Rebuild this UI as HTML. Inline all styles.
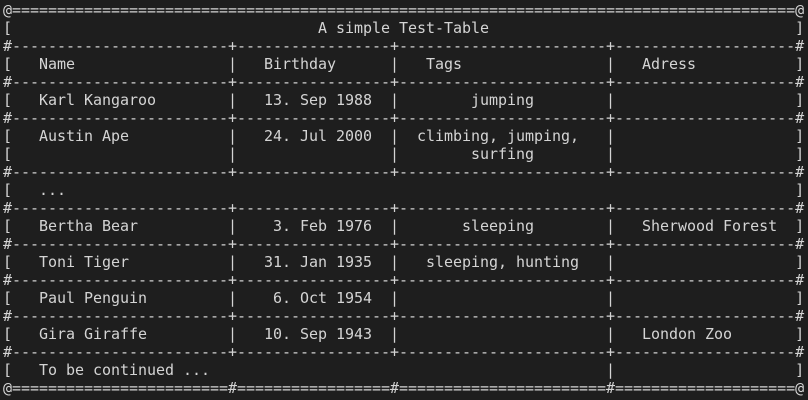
<!DOCTYPE html>
<html><head><meta charset="utf-8"><style>
html,body{margin:0;padding:0;background:#1e1e1e;width:808px;height:400px;overflow:hidden}
pre{margin:0;padding:1px 0 0 3px;font-family:"DejaVu Sans Mono","Liberation Mono",monospace;font-size:15px;line-height:18px;color:#d4d4d4;letter-spacing:-0.03px}
</style></head><body><pre>@=======================================================================================@
[                                  A simple Test-Table                                  ]
#------------------------+-----------------+-----------------------+--------------------#
[   Name                 |   Birthday      |   Tags                |   Adress           ]
#------------------------+-----------------+-----------------------+--------------------#
[   Karl Kangaroo        |   13. Sep 1988  |        jumping        |                    ]
#------------------------+-----------------+-----------------------+--------------------#
[   Austin Ape           |   24. Jul 2000  |  climbing, jumping,   |                    ]
[                        |                 |        surfing        |                    ]
#------------------------+-----------------+-----------------------+--------------------#
[   ...                                                                                 ]
#------------------------+-----------------+-----------------------+--------------------#
[   Bertha Bear          |    3. Feb 1976  |       sleeping        |   Sherwood Forest  ]
#------------------------+-----------------+-----------------------+--------------------#
[   Toni Tiger           |   31. Jan 1935  |   sleeping, hunting   |                    ]
#------------------------+-----------------+-----------------------+--------------------#
[   Paul Penguin         |    6. Oct 1954  |                       |                    ]
#------------------------+-----------------+-----------------------+--------------------#
[   Gira Giraffe         |   10. Sep 1943  |                       |   London Zoo       ]
#------------------------+-----------------+-----------------------+--------------------#
[   To be continued ...                                            |                    ]
@========================#=================#=======================#====================@</pre></body></html>
